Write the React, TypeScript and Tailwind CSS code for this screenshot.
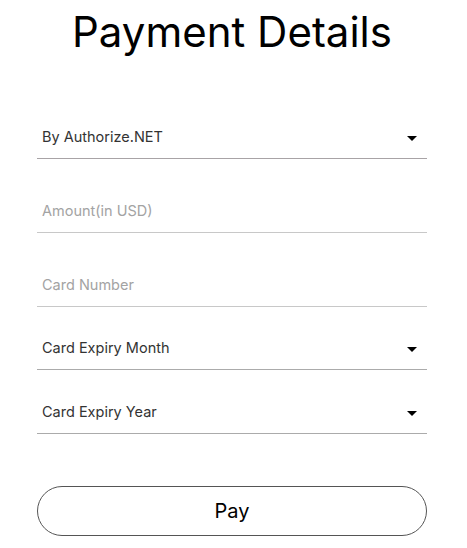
const FONT = "font-['Inter',sans-serif]";

function SelectField({ label, line, className = "" }: { label: string; line: string; className?: string }) {
  return (
    <div className={`flex items-center justify-between h-[46px] pt-[2px] pl-[5px] pr-[10px] border-b ${line} ${className}`}>
      <span className="text-[14.5px] text-[#333333]">{label}</span>
      <span className="mt-[4px] w-0 h-0 border-l-[5px] border-r-[5px] border-t-[5px] border-l-transparent border-r-transparent border-t-black" />
    </div>
  );
}

function InputField({ placeholder, className = "" }: { placeholder: string; className?: string }) {
  return (
    <div className={`flex items-center h-[46px] pt-[2px] pl-[5px] border-b border-[#c8c8c8] ${className}`}>
      <input
        placeholder={placeholder}
        className="w-full bg-transparent outline-none text-[14.5px] text-[#333333] placeholder:text-[#a3a3a3]"
      />
    </div>
  );
}

export default function App() {
  return (
    <div className={`w-[467px] h-[548px] bg-white ${FONT}`}>
      <div className="ml-[37px] w-[390px] flex flex-col">
        <h1 className="pt-[11px] text-center text-[42px] leading-none font-normal text-black">
          Payment Details
        </h1>

        <SelectField label="By Authorize.NET" line="border-[#a8a3a6]" className="mt-[60px]" />
        <InputField placeholder="Amount(in USD)" className="mt-[28px]" />
        <InputField placeholder="Card Number" className="mt-[28px]" />
        <SelectField label="Card Expiry Month" line="border-[#ababab]" className="mt-[17px]" />
        <SelectField label="Card Expiry Year" line="border-[#ababab]" className="mt-[18px]" />

        <button className="mt-[52px] h-[50px] w-full rounded-full border border-[#555555] text-[20px] text-black">
          Pay
        </button>
      </div>
    </div>
  );
}
